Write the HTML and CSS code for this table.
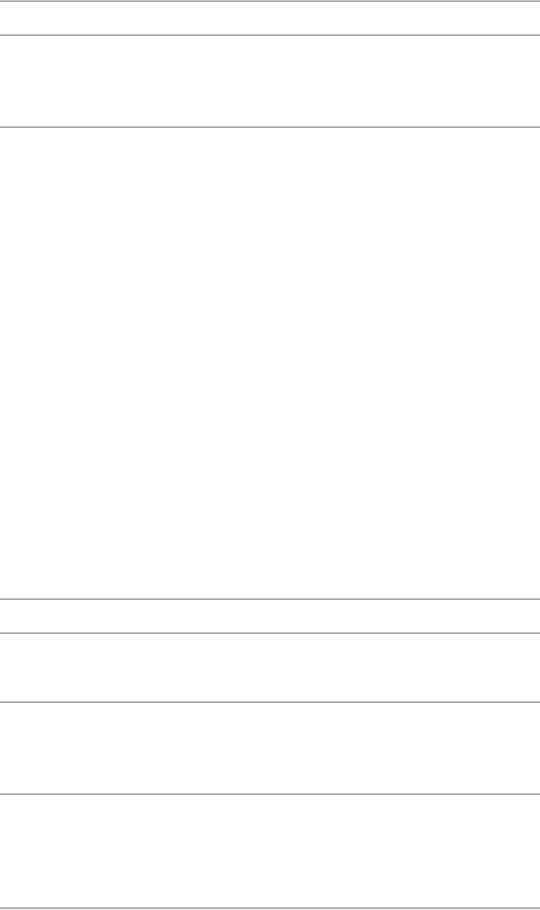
FILE: index.html
```html
<!DOCTYPE html>
<html>
<head>
    <title>Page</title>
    <link rel="stylesheet" href="styles.css">
</head>
<body>
    <div class="page">
        <hr class="rule">
        <div class="block block-header"></div>
        <hr class="rule">
        <div class="block block-intro"></div>
        <hr class="rule">
        <div class="block block-main"></div>
        <hr class="rule">
        <div class="block block-header"></div>
        <hr class="rule">
        <div class="block block-small"></div>
        <hr class="rule">
        <div class="block block-intro"></div>
        <hr class="rule">
        <div class="block block-footer"></div>
        <hr class="rule">
    </div>
</body>
</html>
```
FILE: styles.css
```css
body {
    margin: 0;
    background-color: #fff;
    font-family: "Liberation Sans", Arial, sans-serif;
}

.page {
    display: flex;
    flex-direction: column;
}

.rule {
    margin: 0;
    height: 0;
    border: none;
    border-top: 1px solid #c4c4c4;
    border-bottom: 1px solid #a6a6a6;
}

.block-header {
    height: 32px;
}

.block-intro {
    height: 90px;
}

.block-main {
    height: 470px;
}

.block-small {
    height: 67px;
}

.block-footer {
    height: 112px;
}
```
